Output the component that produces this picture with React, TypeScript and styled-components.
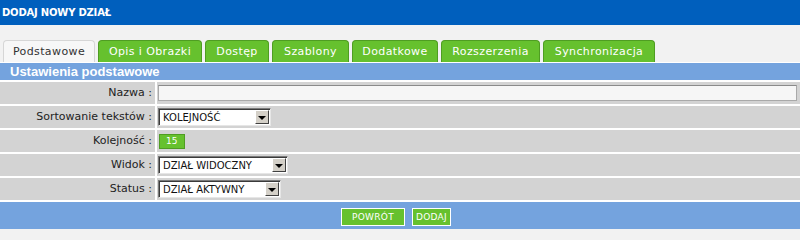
import React from 'react'
import { styled, createGlobalStyle } from 'styled-components'

const GlobalStyle = createGlobalStyle`
  html, body {
    margin: 0;
    padding: 0;
    background: #f2f2f2;
  }
  body {
    font-family: Tahoma, "DejaVu Sans", Verdana, sans-serif;
  }
`

const Page = styled.div`
  width: 800px;
  height: 229px;
  overflow: hidden;
  background: #f2f2f2;
`

const TopBar = styled.div`
  height: 25px;
  background: #005fbd;
  color: #fff;
  font-size: 10px;
  font-weight: bold;
  line-height: 25px;
  padding-left: 2px;
  letter-spacing: -0.2px;
`

const Tabs = styled.div`
  display: flex;
  gap: 3px;
  padding: 15px 0 0 3px;
  height: 22px;
  border-bottom: 1px solid #fff;
`

const Tab = styled.div<{ $active?: boolean; $width: number }>`
  width: ${(p) => p.$width}px;
  box-sizing: border-box;
  height: 22px;
  border: 1px solid ${(p) => (p.$active ? '#d6d6d6' : '#4f9d22')};
  border-bottom: none;
  border-radius: 4px 4px 0 0;
  background: ${(p) => (p.$active ? '#f7f7f7' : '#66c12e')};
  color: ${(p) => (p.$active ? '#333' : '#fff')};
  font-size: 11px;
  line-height: 21px;
  text-align: center;
  letter-spacing: 0.4px;
`

const Section = styled.div`
  height: 17px;
  background: #74a3de;
  color: #fff;
  font-family: "Liberation Sans", Arial, sans-serif;
  font-weight: bold;
  font-size: 13px;
  line-height: 17px;
  padding-left: 10px;
  border-bottom: 2px solid #fff;
`

const Row = styled.div`
  display: grid;
  grid-template-columns: 155px 1fr;
  column-gap: 2px;
  height: 22px;
  background: #fff;
  border-bottom: 2px solid #fff;
`

const Label = styled.div`
  background: #d3d3d3;
  text-align: right;
  padding-right: 3px;
  font-size: 11px;
  line-height: 22px;
  color: #222;
`

const Value = styled.div`
  background: #d3d3d3;
  display: flex;
  align-items: center;
  padding-left: 1px;
  padding-right: 3px;
`

const TextInput = styled.div`
  flex: 1;
  height: 16px;
  box-sizing: border-box;
  background: #f6f6f6;
  border: 1px solid #a9a9a9;
  border-top-color: #8a8a8a;
`

const Select = styled.div<{ $width: number }>`
  width: ${(p) => p.$width}px;
  height: 18px;
  box-sizing: border-box;
  display: flex;
  align-items: center;
  background: #fff;
  border: 1px solid;
  border-color: #7a7a7a #e6e6e6 #e6e6e6 #7a7a7a;
  box-shadow: inset 1px 1px 0 #3a3a3a;
  font-size: 10px;
  color: #111;
  padding-left: 4px;
`

const SelectText = styled.span`
  flex: 1;
  white-space: nowrap;
`

const Arrow = styled.div`
  width: 14px;
  height: 14px;
  margin-right: 1px;
  box-sizing: border-box;
  background: #d4d0c8;
  border: 1px solid;
  border-color: #fff #404040 #404040 #fff;
  display: flex;
  align-items: center;
  justify-content: center;
  &::after {
    content: '';
    border-left: 4px solid transparent;
    border-right: 4px solid transparent;
    border-top: 4px solid #000;
    margin-top: 1px;
  }
`

const Badge = styled.div`
  width: 26px;
  height: 15px;
  box-sizing: border-box;
  background: #66c12e;
  border: 1px solid #4f9d22;
  color: #fff;
  font-size: 9px;
  line-height: 13px;
  padding-left: 6px;
  margin-left: 1px;
`

const Footer = styled.div`
  height: 28px;
  background: #74a3de;
  display: flex;
  justify-content: center;
  align-items: center;
  gap: 7px;
  padding-top: 1px;
  padding-right: 8px;
`

const Button = styled.div<{ $width: number }>`
  width: ${(p) => p.$width}px;
  height: 18px;
  box-sizing: border-box;
  background: #66c12e;
  border: 1px solid #fff;
  color: #fff;
  font-size: 9px;
  line-height: 16px;
  text-align: center;
  letter-spacing: 0.3px;
`

const tabs = [
  { label: 'Podstawowe', width: 92, active: true },
  { label: 'Opis i Obrazki', width: 104 },
  { label: 'Dostęp', width: 64 },
  { label: 'Szablony', width: 77 },
  { label: 'Dodatkowe', width: 86 },
  { label: 'Rozszerzenia', width: 99 },
  { label: 'Synchronizacja', width: 112 },
]

function Dropdown({ width, text }: { width: number; text: string }) {
  return (
    <Select $width={width}>
      <SelectText>{text}</SelectText>
      <Arrow />
    </Select>
  )
}

export default function App() {
  return (
    <Page>
      <GlobalStyle />
      <TopBar>DODAJ NOWY DZIAŁ</TopBar>
      <Tabs>
        {tabs.map((t) => (
          <Tab key={t.label} $active={t.active} $width={t.width}>
            {t.label}
          </Tab>
        ))}
      </Tabs>
      <Section>Ustawienia podstawowe</Section>
      <Row>
        <Label>Nazwa :</Label>
        <Value>
          <TextInput />
        </Value>
      </Row>
      <Row>
        <Label>Sortowanie tekstów :</Label>
        <Value>
          <Dropdown width={113} text="KOLEJNOŚĆ" />
        </Value>
      </Row>
      <Row>
        <Label>Kolejność :</Label>
        <Value>
          <Badge>15</Badge>
        </Value>
      </Row>
      <Row>
        <Label>Widok :</Label>
        <Value>
          <Dropdown width={130} text="DZIAŁ WIDOCZNY" />
        </Value>
      </Row>
      <Row>
        <Label>Status :</Label>
        <Value>
          <Dropdown width={123} text="DZIAŁ AKTYWNY" />
        </Value>
      </Row>
      <Footer>
        <Button $width={64}>POWRÓT</Button>
        <Button $width={39}>DODAJ</Button>
      </Footer>
    </Page>
  )
}
